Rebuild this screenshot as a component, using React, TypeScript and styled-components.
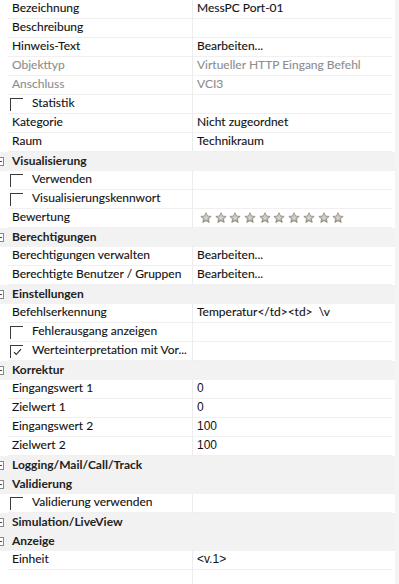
import React from "react";
import styled, { createGlobalStyle } from "styled-components";

const GlobalStyle = createGlobalStyle`
  html, body {
    margin: 0;
    padding: 0;
    background: #fff;
  }
  body {
    font-family: Lato, "Noto Sans", sans-serif;
    font-size: 12px;
    color: #000;
  }
`;

const Page = styled.div`
  width: 399px;
  height: 584px;
  display: flex;
  overflow: hidden;
  background: #fff;
`;

const Grid = styled.div`
  flex: 1;
  display: flex;
  flex-direction: column;
`;

const ScrollStrip = styled.div`
  width: 4px;
  background: #f4f4f4;
`;

const Row = styled.div`
  display: grid;
  grid-template-columns: 8px 185px 1fr;
  height: 19px;
  flex: none;
`;

const Gutter = styled.div`
  background: #fff;
`;

const LabelCell = styled.div<{ $disabled?: boolean }>`
  display: flex;
  align-items: center;
  gap: 9px;
  padding-left: 2px;
  padding-bottom: 2px;
  border-bottom: 1px solid #f0f0f0;
  border-right: 1px solid #ececec;
  color: ${(p) => (p.$disabled ? "#8d8d8d" : "#111")};
  white-space: nowrap;
  overflow: hidden;
  line-height: 16px;
`;

const LabelText = styled.span<{ $indent?: boolean }>`
  padding-left: ${(p) => (p.$indent ? "0" : "2px")};
  -webkit-text-stroke: 0.1px currentColor;
`;

const ValueCell = styled.div<{ $disabled?: boolean; $mono?: boolean }>`
  display: flex;
  align-items: center;
  padding-left: 4px;
  padding-bottom: 2px;
  margin-right: 3px;
  border-bottom: 1px solid #f0f0f0;
  color: ${(p) => (p.$disabled ? "#8d8d8d" : "#111")};
  font-family: ${(p) =>
    p.$mono ? '"Liberation Sans", Arial, sans-serif' : "inherit"};
  -webkit-text-stroke: ${(p) => (p.$mono ? "0" : "0.1px currentColor")};
  white-space: pre;
  overflow: hidden;
  line-height: 16px;
`;

const CategoryRow = styled.div`
  position: relative;
  height: 19px;
  flex: none;
  box-sizing: border-box;
  padding-bottom: 2px;
  background: #f2f2f2;
  display: flex;
  align-items: center;
  padding-left: 12px;
  font-weight: 700;
  color: #222;
  line-height: 16px;
`;

const ExpandBox = styled.span`
  position: absolute;
  left: -5px;
  top: 5px;
  width: 7px;
  height: 7px;
  border: 1px solid #888;
  background: #fff;
  &::after {
    content: "";
    position: absolute;
    left: 1px;
    right: 1px;
    top: 3px;
    height: 1px;
    background: #444;
  }
`;

const CheckBox = styled.span`
  position: relative;
  flex: none;
  width: 13px;
  height: 13px;
  margin-top: 2px;
  border-top: 1px solid #3a3a3a;
  border-left: 1px solid #3a3a3a;
  box-sizing: border-box;
`;

const CheckMark = styled.svg`
  position: absolute;
  left: 2px;
  top: 2px;
`;

const Filler = styled.div`
  flex: 1;
  display: grid;
  grid-template-columns: 8px 185px 1fr;
`;

const FillerLabel = styled.div`
  border-right: 1px solid #ececec;
`;

const Stars = styled.div`
  display: flex;
  gap: 2.7px;
  padding-left: 3px;
  padding-top: 2px;
`;

const Star: React.FC = () => (
  <svg width="12" height="12" viewBox="0 0 24 24">
    <defs>
      <linearGradient id="sg" x1="0" y1="0" x2="0" y2="1">
        <stop offset="0" stopColor="#e9e6df" />
        <stop offset="1" stopColor="#9a958a" />
      </linearGradient>
    </defs>
    <path
      d="M12 1.5l3.1 6.6 7.2.8-5.4 4.9 1.5 7.1L12 17.3l-6.4 3.6 1.5-7.1L1.7 8.9l7.2-.8z"
      fill="url(#sg)"
      stroke="#8c877c"
      strokeWidth="1.6"
      strokeLinejoin="round"
    />
    <path
      d="M12 7.5l1.5 3 3.2.4-2.4 2.2.7 3.2L12 14.6l-3 1.7.7-3.2-2.4-2.2 3.2-.4z"
      fill="#d9d5cc"
    />
  </svg>
);

type Item =
  | { kind: "cat"; label: string }
  | {
      kind: "prop";
      label: string;
      value?: string;
      disabled?: boolean;
      check?: boolean;
      checked?: boolean;
      mono?: boolean;
      stars?: boolean;
    };

const items: Item[] = [
  { kind: "prop", label: "Bezeichnung", value: "MessPC Port-01" },
  { kind: "prop", label: "Beschreibung" },
  { kind: "prop", label: "Hinweis-Text", value: "Bearbeiten..." },
  { kind: "prop", label: "Objekttyp", value: "Virtueller HTTP Eingang Befehl", disabled: true },
  { kind: "prop", label: "Anschluss", value: "VCI3", disabled: true },
  { kind: "prop", label: "Statistik", check: true },
  { kind: "prop", label: "Kategorie", value: "Nicht zugeordnet" },
  { kind: "prop", label: "Raum", value: "Technikraum" },
  { kind: "cat", label: "Visualisierung" },
  { kind: "prop", label: "Verwenden", check: true },
  { kind: "prop", label: "Visualisierungskennwort", check: true },
  { kind: "prop", label: "Bewertung", stars: true },
  { kind: "cat", label: "Berechtigungen" },
  { kind: "prop", label: "Berechtigungen verwalten", value: "Bearbeiten..." },
  { kind: "prop", label: "Berechtigte Benutzer / Gruppen", value: "Bearbeiten..." },
  { kind: "cat", label: "Einstellungen" },
  { kind: "prop", label: "Befehlserkennung", value: "Temperatur</td><td>  \\v" },
  { kind: "prop", label: "Fehlerausgang anzeigen", check: true },
  { kind: "prop", label: "Werteinterpretation mit Vor...", check: true, checked: true },
  { kind: "cat", label: "Korrektur" },
  { kind: "prop", label: "Eingangswert 1", value: "0", mono: true },
  { kind: "prop", label: "Zielwert 1", value: "0", mono: true },
  { kind: "prop", label: "Eingangswert 2", value: "100", mono: true },
  { kind: "prop", label: "Zielwert 2", value: "100", mono: true },
  { kind: "cat", label: "Logging/Mail/Call/Track" },
  { kind: "cat", label: "Validierung" },
  { kind: "prop", label: "Validierung verwenden", check: true },
  { kind: "cat", label: "Simulation/LiveView" },
  { kind: "cat", label: "Anzeige" },
  { kind: "prop", label: "Einheit", value: "<v.1>", mono: true },
];

export default function App() {
  return (
    <>
      <GlobalStyle />
      <Page>
        <Grid>
          {items.map((it, i) =>
            it.kind === "cat" ? (
              <CategoryRow key={i}>
                <ExpandBox />
                {it.label}
              </CategoryRow>
            ) : (
              <Row key={i}>
                <Gutter />
                <LabelCell $disabled={it.disabled}>
                  {it.check && (
                    <CheckBox>
                      {it.checked && (
                        <CheckMark width="9" height="8" viewBox="0 0 9 8">
                          <path d="M1 4.2l2.2 2.3L8 1.2" fill="none" stroke="#222" strokeWidth="1.1" />
                        </CheckMark>
                      )}
                    </CheckBox>
                  )}
                  <LabelText $indent={it.check}>{it.label}</LabelText>
                </LabelCell>
                <ValueCell $disabled={it.disabled} $mono={it.mono}>
                  {it.stars ? (
                    <Stars>
                      {Array.from({ length: 10 }).map((_, s) => (
                        <Star key={s} />
                      ))}
                    </Stars>
                  ) : (
                    it.value
                  )}
                </ValueCell>
              </Row>
            )
          )}
          <Filler>
            <Gutter />
            <FillerLabel />
            <div />
          </Filler>
        </Grid>
        <ScrollStrip />
      </Page>
    </>
  );
}
